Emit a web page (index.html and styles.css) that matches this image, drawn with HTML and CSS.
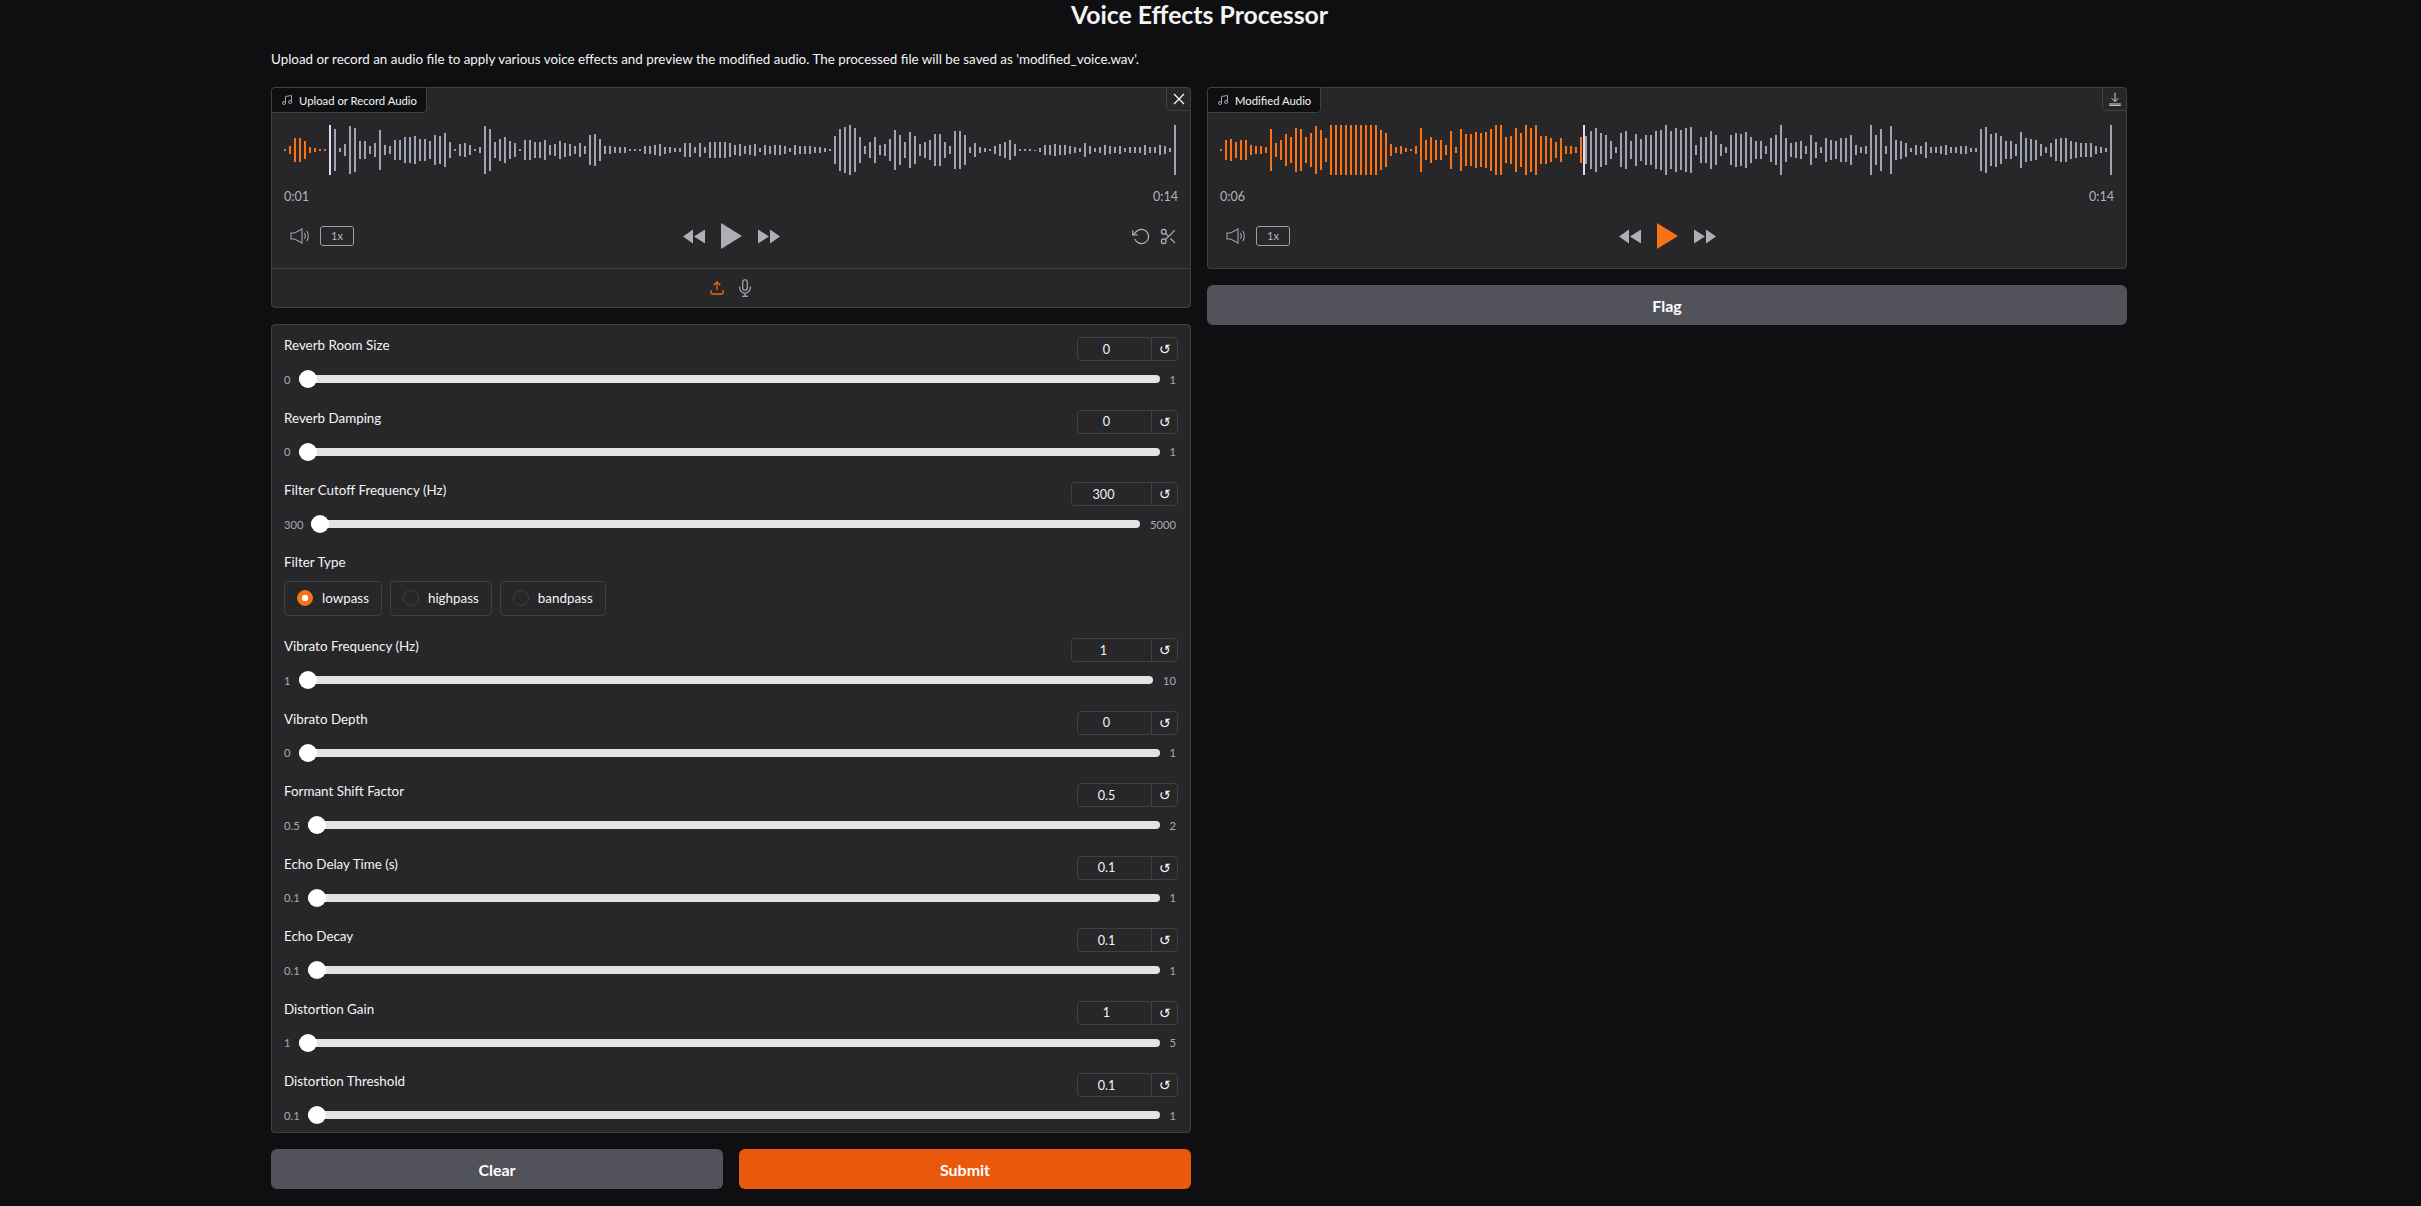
FILE: index.html
```html
<!DOCTYPE html>
<html lang="en">
<head>
  <meta charset="UTF-8" />
  <title>Voice Effects Processor</title>
  <link rel="stylesheet" href="styles.css">
</head>
<body>
  <div class="page">
    <h1>Voice Effects Processor</h1>
    <p class="intro">Upload or record an audio file to apply various voice effects and preview the modified audio. The processed file will be saved as 'modified_voice.wav'.</p>

    <div class="columns">
      <div class="col">
        <section class="block audio">
          <div class="tab">
            <svg class="ic-music" viewBox="0 0 24 24"><path d="M9 18V5l12-2v13"/><circle cx="6" cy="18" r="3"/><circle cx="18" cy="16" r="3"/></svg>
            <span>Upload or Record Audio</span>
          </div>
          <button class="corner-btn">
            <svg class="ic-close" viewBox="0 0 12 12"><path d="M1 1l10 10M11 1L1 11"/></svg>
          </button>
          <div class="wave" id="waveIn"></div>
          <div class="times"><span>0:01</span><span>0:14</span></div>
          <div class="controls">
            <div class="ctl-left">
              <svg class="ic-volume" viewBox="0 0 20 16"><path d="M1 5h3.5L12 1v14l-7.500-4H1z"/><path d="M14.500 5q1.500 3 0 6M17 3q2.500 5 0 10"/></svg>
              <span class="speed">1x</span>
            </div>
            <div class="ctl-mid">
              <svg class="ic-skip" viewBox="0 0 22 15"><path d="M10 .5L0 7.500l10 7zM22 .5L11 7.500l11 7z"/></svg>
              <svg class="ic-play" viewBox="0 0 21 26"><path d="M0 0l21 13L0 26z"/></svg>
              <svg class="ic-skip" viewBox="0 0 22 15"><path d="M12 .5l10 7-10 7zM0 .5l11 7-11 7z"/></svg>
            </div>
            <div class="ctl-right">
              <svg class="ic-line ic-reset" viewBox="0 0 24 24"><polyline points="1 4 1 10 7 10"/><path d="M3.510 15a9 9 0 1 0 2.130-9.360L1 10"/></svg>
              <svg class="ic-line ic-scissors" viewBox="0 0 24 24"><circle cx="6" cy="6" r="3"/><circle cx="6" cy="18" r="3"/><line x1="20" y1="4" x2="8.120" y2="15.880"/><line x1="14.470" y1="14.480" x2="20" y2="20"/><line x1="8.120" y1="8.120" x2="12" y2="12"/></svg>
            </div>
          </div>
          <div class="sources">
            <svg class="ic-upload" viewBox="0 0 24 24"><path d="M21 15v4a2 2 0 0 1-2 2H5a2 2 0 0 1-2-2v-4"/><polyline points="17 8 12 3 7 8"/><line x1="12" y1="3" x2="12" y2="15"/></svg>
            <svg class="ic-line ic-mic" viewBox="0 0 24 24"><path d="M12 1a3 3 0 0 0-3 3v8a3 3 0 0 0 6 0V4a3 3 0 0 0-3-3z"/><path d="M19 10v2a7 7 0 0 1-14 0v-2"/><line x1="12" y1="19" x2="12" y2="23"/><line x1="8" y1="23" x2="16" y2="23"/></svg>
          </div>
        </section>

        <section class="block form">
          <div class="field">
            <div class="field-head"><label>Reverb Room Size</label><div class="num"><input type="number" value="0"><button>↺</button></div></div>
            <div class="slide"><span>0</span><input type="range" min="0" max="1" step="0.01" value="0"><span class="max">1</span></div>
          </div>
          <div class="field">
            <div class="field-head"><label>Reverb Damping</label><div class="num"><input type="number" value="0"><button>↺</button></div></div>
            <div class="slide"><span>0</span><input type="range" min="0" max="1" step="0.01" value="0"><span class="max">1</span></div>
          </div>
          <div class="field">
            <div class="field-head"><label>Filter Cutoff Frequency (Hz)</label><div class="num wide"><input type="number" value="300"><button>↺</button></div></div>
            <div class="slide"><span>300</span><input type="range" min="300" max="5000" value="300"><span class="max">5000</span></div>
          </div>
          <div class="field radio-field">
            <label>Filter Type</label>
            <div class="radios">
              <label class="radio"><input type="radio" name="filter" checked>lowpass</label>
              <label class="radio"><input type="radio" name="filter">highpass</label>
              <label class="radio"><input type="radio" name="filter">bandpass</label>
            </div>
          </div>
          <div class="field">
            <div class="field-head"><label>Vibrato Frequency (Hz)</label><div class="num wide"><input type="number" value="1"><button>↺</button></div></div>
            <div class="slide"><span>1</span><input type="range" min="1" max="10" value="1"><span class="max">10</span></div>
          </div>
          <div class="field">
            <div class="field-head"><label>Vibrato Depth</label><div class="num"><input type="number" value="0"><button>↺</button></div></div>
            <div class="slide"><span>0</span><input type="range" min="0" max="1" step="0.01" value="0"><span class="max">1</span></div>
          </div>
          <div class="field">
            <div class="field-head"><label>Formant Shift Factor</label><div class="num"><input type="number" value="0.5"><button>↺</button></div></div>
            <div class="slide"><span>0.5</span><input type="range" min="0.5" max="2" step="0.01" value="0.5"><span class="max">2</span></div>
          </div>
          <div class="field">
            <div class="field-head"><label>Echo Delay Time (s)</label><div class="num"><input type="number" value="0.1"><button>↺</button></div></div>
            <div class="slide"><span>0.1</span><input type="range" min="0.1" max="1" step="0.01" value="0.1"><span class="max">1</span></div>
          </div>
          <div class="field">
            <div class="field-head"><label>Echo Decay</label><div class="num"><input type="number" value="0.1"><button>↺</button></div></div>
            <div class="slide"><span>0.1</span><input type="range" min="0.1" max="1" step="0.01" value="0.1"><span class="max">1</span></div>
          </div>
          <div class="field">
            <div class="field-head"><label>Distortion Gain</label><div class="num"><input type="number" value="1"><button>↺</button></div></div>
            <div class="slide"><span>1</span><input type="range" min="1" max="5" step="0.1" value="1"><span class="max">5</span></div>
          </div>
          <div class="field">
            <div class="field-head"><label>Distortion Threshold</label><div class="num"><input type="number" value="0.1"><button>↺</button></div></div>
            <div class="slide"><span>0.1</span><input type="range" min="0.1" max="1" step="0.01" value="0.1"><span class="max">1</span></div>
          </div>
        </section>

        <div class="actions">
          <button class="btn">Clear</button>
          <button class="btn primary">Submit</button>
        </div>
      </div>

      <div class="col">
        <section class="block audio">
          <div class="tab">
            <svg class="ic-music" viewBox="0 0 24 24"><path d="M9 18V5l12-2v13"/><circle cx="6" cy="18" r="3"/><circle cx="18" cy="16" r="3"/></svg>
            <span>Modified Audio</span>
          </div>
          <button class="corner-btn">
            <svg class="ic-download" viewBox="0 0 24 24"><path d="M12 1v15M6 10.500l6 6 6-6M2 20.500h20M2 23h20"/></svg>
          </button>
          <div class="wave" id="waveOut"></div>
          <div class="times"><span>0:06</span><span>0:14</span></div>
          <div class="controls">
            <div class="ctl-left">
              <svg class="ic-volume" viewBox="0 0 20 16"><path d="M1 5h3.500L12 1v14l-7.500-4H1z"/><path d="M14.500 5q1.500 3 0 6M17 3q2.500 5 0 10"/></svg>
              <span class="speed">1x</span>
            </div>
            <div class="ctl-mid">
              <svg class="ic-skip" viewBox="0 0 22 15"><path d="M10 .5L0 7.500l10 7zM22 .5L11 7.500l11 7z"/></svg>
              <svg class="ic-play playing" viewBox="0 0 21 26"><path d="M0 0l21 13L0 26z"/></svg>
              <svg class="ic-skip" viewBox="0 0 22 15"><path d="M12 .5l10 7-10 7zM0 .5l11 7-11 7z"/></svg>
            </div>
            <div class="ctl-right"></div>
          </div>
        </section>
        <button class="btn">Flag</button>
      </div>
    </div>
  </div>

  <script src="waves.js"></script>
</body>
</html>
```

FILE: styles.css
```css
* {
  margin: 0;
  padding: 0;
  box-sizing: border-box;
}

body {
  font-family: 'Lato', 'Noto Sans', sans-serif;
  background-color: #0f0f11;
  color: #f4f4f5;
  font-size: 13.4px;
}

.page {
  width: 1857px;
  margin-left: 271px;
}

h1 {
  font-size: 24.8px;
  line-height: 30px;
  font-weight: 700;
  text-align: center;
}

.intro {
  margin-top: 20px;
  line-height: 18px;
}

.columns {
  display: grid;
  grid-template-columns: 920px 920px;
  gap: 16px;
  margin-top: 19px;
  align-items: start;
}

.col {
  display: flex;
  flex-direction: column;
  gap: 16px;
}

.block {
  background: #27272a;
  border: 1px solid #3f3f46;
  border-radius: 4px;
}

/* audio player */
.audio {
  position: relative;
  padding: 37px 12px 0;
}

.tab {
  position: absolute;
  top: -1px;
  left: -1px;
  height: 26px;
  display: flex;
  align-items: center;
  gap: 6px;
  padding: 0 9px;
  background: #0f0f11;
  border: 1px solid #3f3f46;
  border-radius: 4px 0 4px 0;
  font-size: 11.3px;
}

.ic-music {
  width: 12px;
  height: 12px;
  fill: none;
  stroke: #a1a1aa;
  stroke-width: 2;
}

.corner-btn {
  position: absolute;
  top: -1px;
  right: -1px;
  width: 25px;
  height: 24px;
  display: flex;
  align-items: center;
  justify-content: center;
  background: #27272a;
  border: 1px solid #3f3f46;
  border-radius: 0 4px 0 4px;
}

.ic-close {
  width: 12px;
  height: 12px;
  fill: none;
  stroke: #fff;
  stroke-width: 1.2;
}

.ic-download {
  width: 14px;
  height: 14px;
  fill: none;
  stroke: #d4d4d8;
  stroke-width: 1.7;
}

.wave {
  position: relative;
  height: 50px;
  display: flex;
  align-items: center;
  gap: 3px;
}

.wave .bar {
  flex: none;
  width: 2px;
  background: #9fa3b4;
}

.wave .bar.played {
  background: #f97316;
}

.wave .cursor {
  position: absolute;
  top: 0;
  width: 2px;
  height: 50px;
  background: #ddd9ee;
}

.times {
  display: flex;
  justify-content: space-between;
  margin-top: 13px;
  line-height: 18px;
  font-size: 12.6px;
  color: #b4b4bb;
}

.controls {
  display: grid;
  grid-template-columns: 1fr auto 1fr;
  align-items: center;
  height: 26px;
  margin-top: 17px;
  margin-bottom: 19px;
}

.ctl-left {
  display: flex;
  align-items: center;
  gap: 10px;
  padding-left: 6px;
}

.ic-volume {
  width: 20px;
  height: 16px;
  fill: none;
  stroke: #a1a1aa;
  stroke-width: 1.1;
}

.speed {
  width: 34px;
  height: 20px;
  border: 1px solid #a1a1aa;
  border-radius: 3px;
  text-align: center;
  line-height: 18px;
  font-size: 11px;
  color: #b4b4bb;
}

.ctl-mid {
  display: flex;
  align-items: center;
  gap: 16px;
}

.ic-skip {
  width: 22px;
  height: 15px;
  fill: #aeaeb6;
}

.ic-play {
  width: 21px;
  height: 26px;
  fill: #aeaeb6;
}

.ic-play.playing {
  fill: #f97316;
}

.ctl-right {
  display: flex;
  align-items: center;
  justify-content: flex-end;
  gap: 8px;
}

.ic-line {
  fill: none;
  stroke: #b4b4bb;
  stroke-width: 1.5;
}

.ic-reset {
  width: 19px;
  height: 19px;
}

.ic-scissors {
  width: 19px;
  height: 19px;
}

.sources {
  display: flex;
  align-items: center;
  justify-content: center;
  gap: 11px;
  height: 39px;
  margin: 0 -12px;
  border-top: 1px solid #3f3f46;
}

.ic-upload {
  width: 16px;
  height: 16px;
  fill: none;
  stroke: #ea6a12;
  stroke-width: 2;
}

.ic-mic {
  width: 18px;
  height: 18px;
}

/* slider form */
.form {
  display: flex;
  flex-direction: column;
  gap: 18.5px;
  padding: 12px 12px 5px;
}

.field-head {
  display: flex;
  justify-content: space-between;
  align-items: flex-start;
  height: 24px;
}

.field-head label {
  padding-top: 1px;
}

.field label {
  line-height: 14px;
}

.num {
  display: flex;
  width: 101px;
  height: 24px;
  border: 1px solid #3f3f46;
  border-radius: 4px;
}

.num.wide {
  width: 107px;
}

.num input {
  flex: 1;
  min-width: 0;
  padding-right: 16px;
  background: none;
  border: none;
  color: #f4f4f5;
  font: inherit;
  font-size: 12.6px;
  text-align: center;
  appearance: textfield;
}

.num input::-webkit-inner-spin-button {
  display: none;
}

.num button {
  width: 26px;
  flex: none;
  background: none;
  border: none;
  border-left: 1px solid #3f3f46;
  color: #f4f4f5;
  font-family: 'DejaVu Sans', sans-serif;
  font-size: 14px;
}

.slide {
  display: flex;
  align-items: center;
  gap: 8px;
  height: 24px;
  margin-top: 6px;
  font-size: 11.2px;
  color: #a9a9b3;
}

.slide .max {
  margin-left: 2px;
  margin-right: 2px;
}

.slide input[type="range"] {
  flex: 1;
  min-width: 0;
  height: 18px;
  appearance: none;
  background: none;
}

.slide input[type="range"]::-webkit-slider-runnable-track {
  height: 8px;
  background: #e4e4e7;
  border-radius: 4px;
}

.slide input[type="range"]::-webkit-slider-thumb {
  appearance: none;
  width: 18px;
  height: 18px;
  margin-top: -5px;
  background: #fff;
  border-radius: 50%;
}

.radio-field {
  padding-bottom: 4px;
}

.radio-field > label {
  display: block;
}

.radios {
  display: flex;
  gap: 8px;
  margin-top: 12px;
}

.radio {
  display: flex;
  align-items: center;
  gap: 9px;
  height: 35px;
  padding: 0 12px;
  border: 1px solid #3f3f46;
  border-radius: 4px;
}

.radio input {
  appearance: none;
  width: 16px;
  height: 16px;
  border: 1px solid #3f3f46;
  border-radius: 50%;
}

.radio input:checked {
  background: radial-gradient(circle, #fff 0 3px, #f97316 3.5px);
  border-color: #f97316;
}

/* buttons */
.actions {
  display: flex;
  gap: 16px;
}

.btn {
  flex: 1;
  height: 40px;
  min-height: 40px;
  background: #52525b;
  border: none;
  border-radius: 6px;
  color: #fff;
  font: inherit;
  font-size: 16px;
  font-weight: 700;
}

.btn.primary {
  background: #ea580c;
}
```

FILE: waves.js
```js
const waves = [
  {
    id: 'waveIn',
    played: 9,
    cursor: 45,
    bars: [2,8,24,24,18,6,4,2,2,50,42,4,12,48,44,18,18,8,14,40,10,8,20,20,26,26,28,22,22,18,30,28,34,16,2,12,14,10,2,6,48,42,16,22,26,18,14,2,20,20,16,16,20,10,12,18,14,12,8,14,8,30,32,22,8,8,6,6,6,2,2,2,8,8,10,12,7,6,4,4,14,14,6,14,6,16,16,16,16,14,10,12,8,10,12,4,10,
      8,10,10,8,4,10,8,8,8,6,6,4,2,28,42,46,50,44,26,8,16,26,10,12,22,40,30,16,36,28,12,16,20,32,32,16,8,38,38,30,6,14,6,4,2,8,12,16,20,12,2,2,2,1,4,10,10,12,10,10,8,6,4,14,8,4,6,10,8,6,8,4,6,6,6,10,6,6,10,8,4,50]
  },
  {
    id: 'waveOut',
    played: 73,
    cursor: 363,
    bars: [2,20,22,16,20,20,10,8,8,6,42,14,20,32,26,44,42,26,34,48,40,24,50,50,50,50,50,50,50,50,50,50,40,34,12,6,8,4,2,8,44,20,26,20,20,10,38,6,42,32,32,36,34,36,42,50,50,26,28,44,34,50,44,50,28,28,24,16,24,8,8,6,26,28,38,44,34,30,18,6,34,38,
      18,32,22,30,30,38,40,50,38,44,40,44,46,10,26,26,38,30,12,6,30,34,32,36,26,18,18,8,24,30,50,24,14,16,18,8,30,16,6,24,20,18,24,24,30,10,6,8,50,30,42,8,48,20,18,14,4,10,8,16,6,6,8,10,6,6,8,8,4,4,42,46,32,34,28,18,18,12,36,24,22,20,12,6,14,22,24,24,18,16,14,14,14,8,6,4,50]
  }
];

waves.forEach(function (wave) {
  const box = document.getElementById(wave.id);

  wave.bars.forEach(function (h, i) {
    const bar = document.createElement('div');
    bar.className = i < wave.played ? 'bar played' : 'bar';
    bar.style.height = h + 'px';
    box.appendChild(bar);
  });

  const cursor = document.createElement('div');
  cursor.className = 'cursor';
  cursor.style.left = wave.cursor + 'px';
  box.appendChild(cursor);
});
```
